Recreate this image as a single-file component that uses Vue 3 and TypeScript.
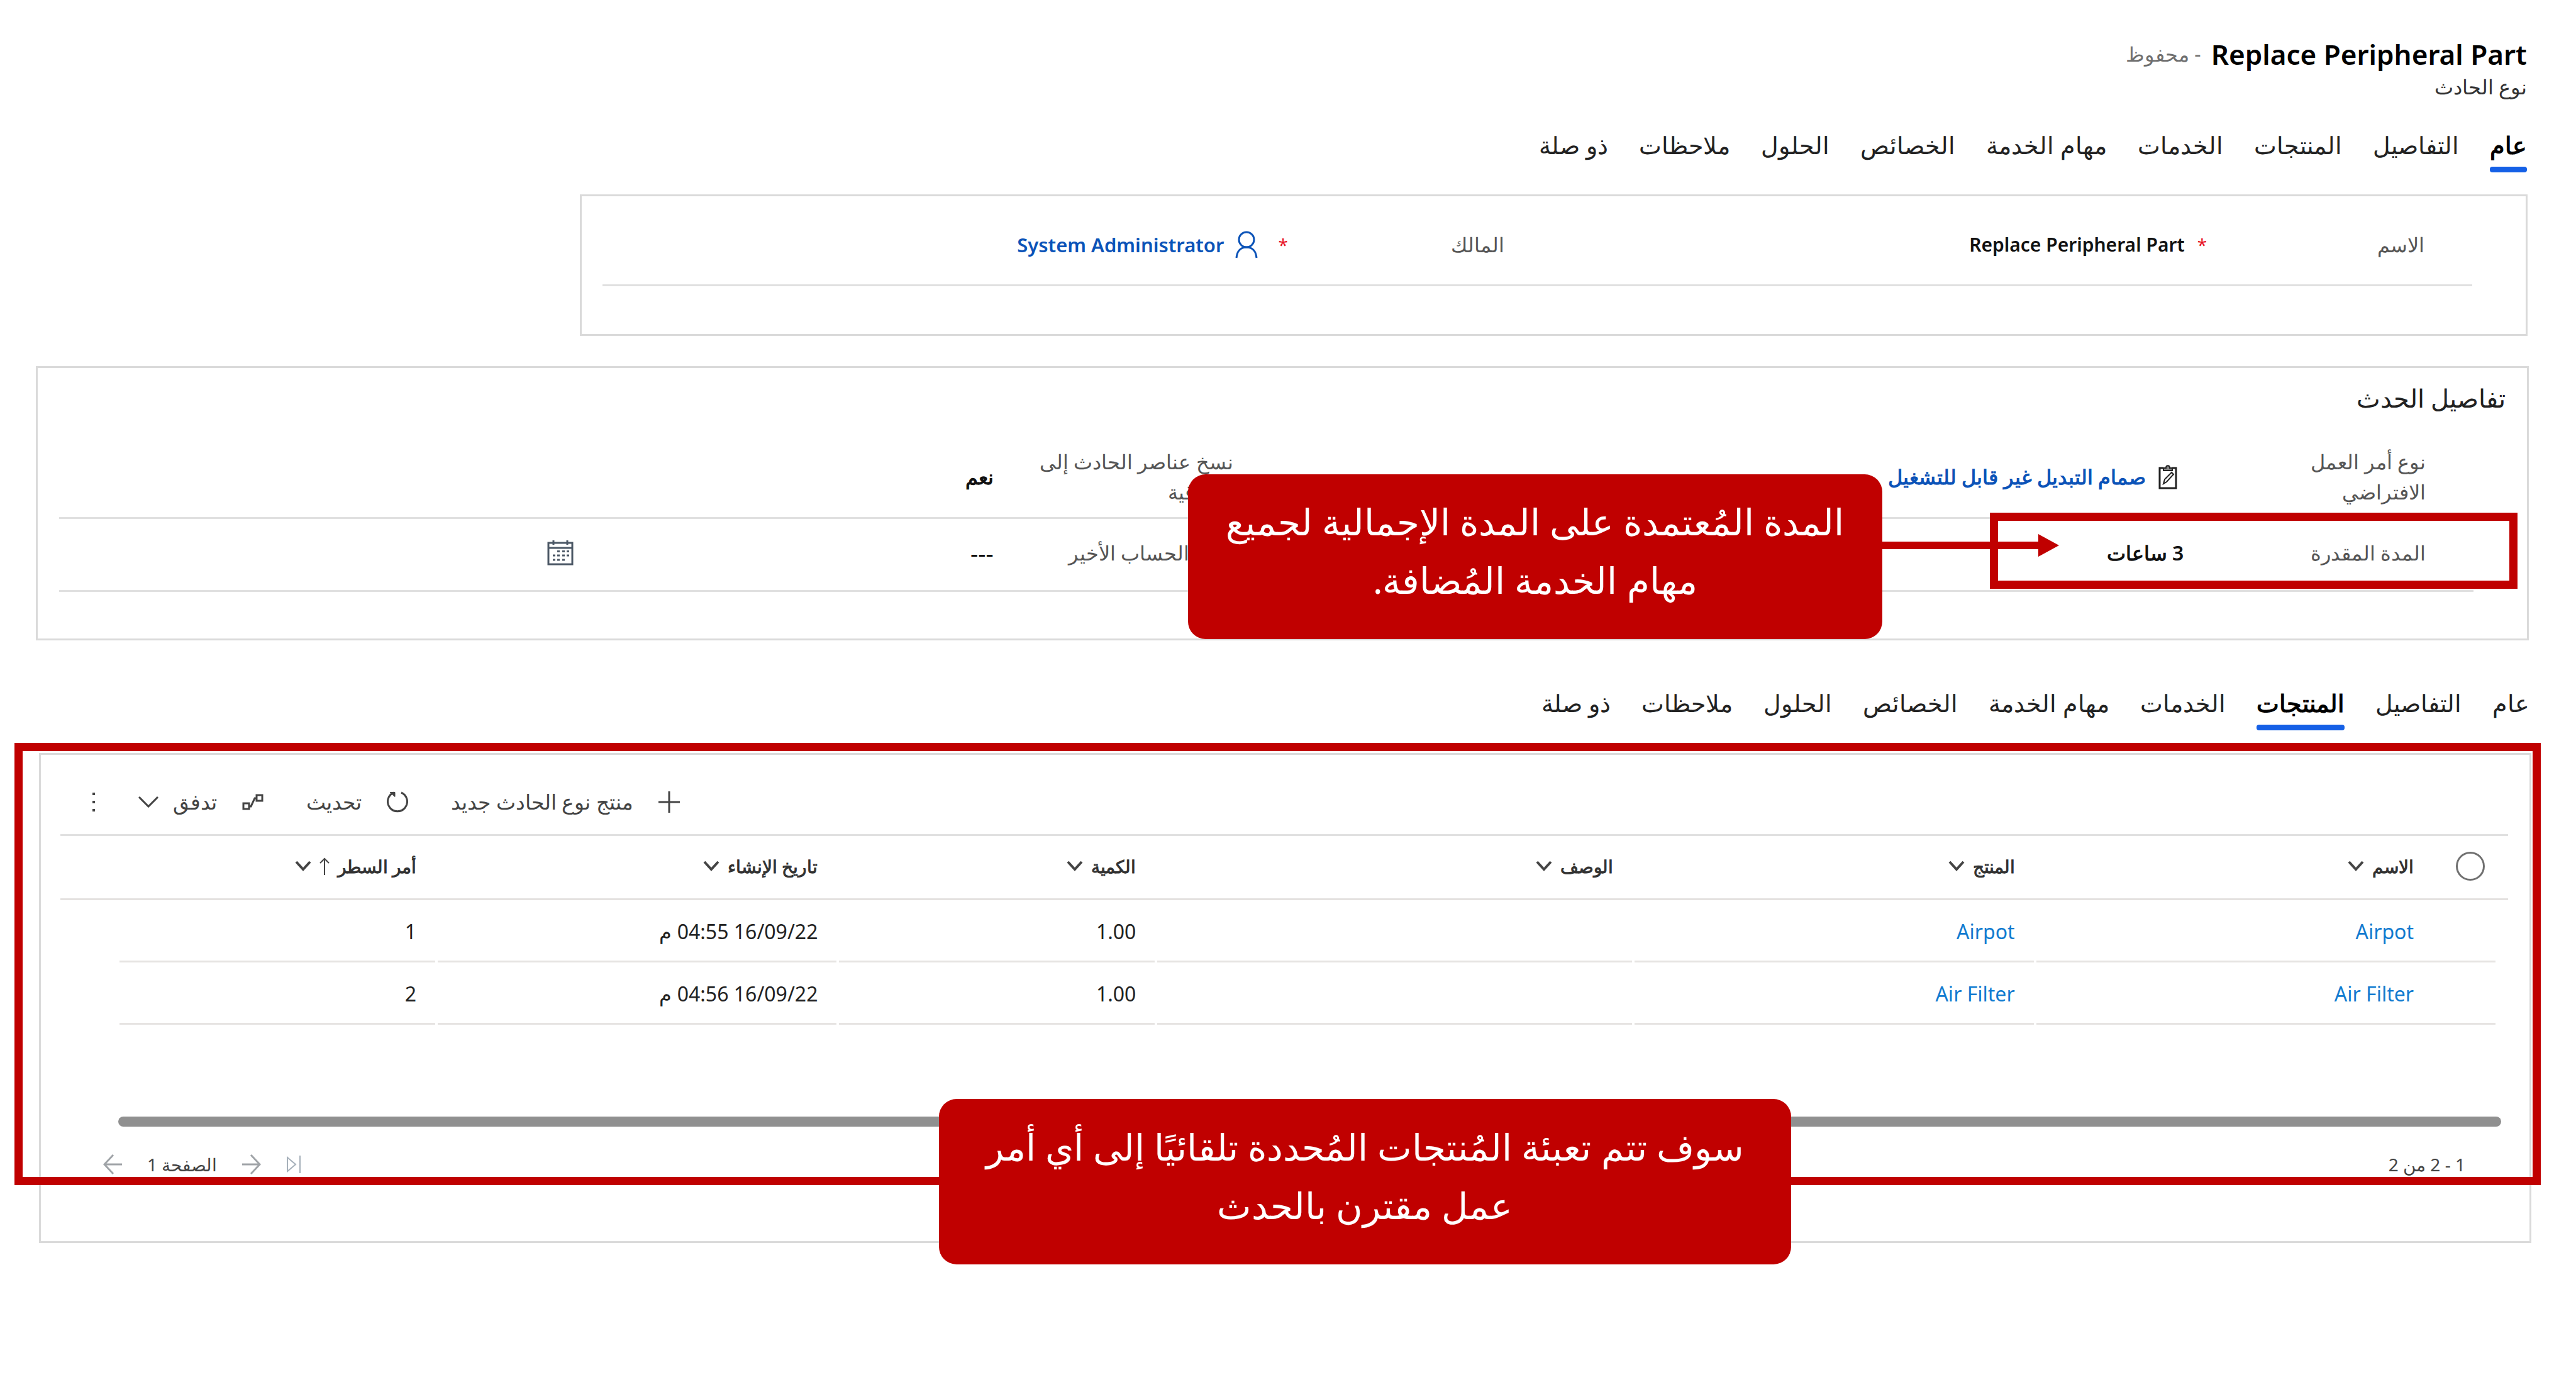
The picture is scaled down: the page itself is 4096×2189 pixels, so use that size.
<script setup lang="ts">
interface Column {
  label: string
  width: string
  sorted?: boolean
}

const tabs: string[] = [
  'عام',
  'التفاصيل',
  'المنتجات',
  'الخدمات',
  'مهام الخدمة',
  'الخصائص',
  'الحلول',
  'ملاحظات',
  'ذو صلة',
]

const columns: Column[] = [
  { label: 'الاسم', width: '16.3%' },
  { label: 'المنتج', width: '16.4%' },
  { label: 'الوصف', width: '19.5%' },
  { label: 'الكمية', width: '13%' },
  { label: 'تاريخ الإنشاء', width: '16.4%' },
  { label: 'أمر السطر', width: '13%', sorted: true },
]

const rows = [
  { name: 'Airpot', product: 'Airpot', description: '', quantity: '1.00', created: '16/09/22 04:55 م', order: 1 },
  { name: 'Air Filter', product: 'Air Filter', description: '', quantity: '1.00', created: '16/09/22 04:56 م', order: 2 },
]
</script>

<template>
  <main class="page" dir="rtl">
    <header class="record">
      <h1 class="record-title">
        <span>Replace Peripheral Part</span>
        <small>- محفوظ</small>
      </h1>
      <p class="record-type">نوع الحادث</p>
    </header>

    <nav class="tabs">
      <button v-for="tab in tabs" :key="tab" type="button" :class="{ active: tab === 'عام' }">{{ tab }}</button>
    </nav>

    <section class="panel summary">
      <div class="fields">
        <div class="label">
          <label for="record-name">الاسم</label>
          <span class="required">*</span>
        </div>
        <div class="value"><input id="record-name" class="name-input" type="text" value="Replace Peripheral Part" /></div>
        <div class="label">
          <span>المالك</span>
          <span class="required">*</span>
        </div>
        <div class="value owner">
          <svg class="icon-person" viewBox="0 0 36 44" fill="none" stroke="#0b53b8" stroke-width="3">
            <circle cx="18" cy="14" r="12" />
            <path d="M2 43C3 32 9 26 18 26s15 6 16 17" />
          </svg>
          <a href="#" class="link">System Administrator</a>
        </div>
      </div>
    </section>

    <section class="panel details">
      <h2>تفاصيل الحدث</h2>
      <div class="fields">
        <div class="label"><span class="two-line">نوع أمر العمل الافتراضي</span></div>
        <div class="value work-type">
          <svg class="icon-clipboard" viewBox="0 0 30 40" fill="none" stroke="#222" stroke-width="3">
            <path d="M8 6H2v32h26V6h-6" />
            <path d="M8 10V6h4c0-5 6-5 6 0h4v4z" fill="#888" stroke-width="2" />
            <path d="M8 31l2-7L21 13l3 3-11 12z" stroke-width="2" />
          </svg>
          <a href="#" class="link">صمام التبديل غير قابل للتشغيل</a>
        </div>
        <div class="label"><span class="two-line wide">نسخ عناصر الحادث إلى الاتفاقية</span></div>
        <div class="value strong">نعم</div>
      </div>
      <div class="fields">
        <div class="label"><label for="duration">المدة المقدرة</label></div>
        <div class="value"><input id="duration" type="text" value="3 ساعات" /></div>
        <div class="label"><span>وقت الحساب الأخير</span></div>
        <div class="value date">
          <span>---</span>
          <button type="button" aria-label="التقويم">
            <svg class="icon-calendar" viewBox="0 0 42 40" fill="none" stroke="#4c5866" stroke-width="3">
              <path d="M2 4h38v34H2zM2 12h38" />
              <path d="M10 0v7M32 0v7" />
              <path d="M16 17.500h4M24 17.500h4M31 17.500h4M9 24h4M16 24h4M24 24h4M31 24h4M9 31h4M16 31h4M24 31h4" />
            </svg>
          </button>
        </div>
      </div>

      <div class="highlight duration-highlight"></div>
      <div class="arrow">
        <svg viewBox="0 0 33 36" fill="#c00000"><path d="M0 0l33 18L0 36z" /></svg>
      </div>
      <p class="callout duration-callout">المدة المُعتمدة على المدة الإجمالية لجميع مهام الخدمة المُضافة.</p>
    </section>

    <nav class="tabs second">
      <button v-for="tab in tabs" :key="tab" type="button" :class="{ active: tab === 'المنتجات' }">{{ tab }}</button>
    </nav>

    <div class="products-area">
      <section class="panel products">
        <div class="toolbar">
          <button type="button">
            <svg class="icon-plus" viewBox="0 0 34 34" fill="none" stroke="#444" stroke-width="3"><path d="M17 0v34M0 17h34" /></svg>
            <span>منتج نوع الحادث جديد</span>
          </button>
          <button type="button">
            <svg class="icon-refresh" viewBox="0 0 34 34" fill="none" stroke="#444" stroke-width="3">
              <path d="M23 2a15.500 15.500 0 1 1-12 0" />
              <path d="M5 1.500h8v7z" fill="#444" stroke-width="1" />
            </svg>
            <span>تحديث</span>
          </button>
          <button type="button">
            <svg class="icon-flow" viewBox="0 0 34 26" fill="none" stroke="#444" stroke-width="3">
              <path d="M2 15h9v9H2zM23 2h9v9h-9zM11 20h3l6-13h3" />
            </svg>
            <span class="with-chevron">
              تدفق
              <svg class="chevron-light" viewBox="0 0 32 18" fill="none" stroke="#444" stroke-width="3"><path d="M1 1l15 15L31 1" /></svg>
            </span>
          </button>
          <button type="button" aria-label="المزيد">
            <svg class="icon-more" viewBox="0 0 6 30" fill="#444"><path d="M1 0h4v4H1zM1 13h4v4H1zM1 26h4v4H1z" /></svg>
          </button>
        </div>

        <table>
          <colgroup>
            <col class="select-col" />
            <col v-for="column in columns" :key="column.label" :style="{ width: column.width }" />
            <col />
          </colgroup>
          <thead>
            <tr>
              <th><input type="checkbox" aria-label="تحديد الكل" /></th>
              <th v-for="column in columns" :key="column.label" scope="col">
                <span class="heading">
                  {{ column.label }}
                  <svg v-if="column.sorted" class="icon-up" viewBox="0 0 16 28" fill="none" stroke="#444" stroke-width="2"><path d="M8 28V2M1 9l7-7 7 7" /></svg>
                  <svg class="chevron" viewBox="0 0 26 17" fill="none" stroke="#444" stroke-width="4"><path d="M2 2l11 12L24 2" /></svg>
                </span>
              </th>
              <td></td>
            </tr>
          </thead>
          <tbody>
            <tr v-for="row in rows" :key="row.order">
              <td></td>
              <td><a href="#">{{ row.name }}</a></td>
              <td><a href="#">{{ row.product }}</a></td>
              <td>{{ row.description }}</td>
              <td>{{ row.quantity }}</td>
              <td>{{ row.created }}</td>
              <td>{{ row.order }}</td>
              <td></td>
            </tr>
          </tbody>
        </table>

        <div class="scrollbar"></div>

        <footer class="pager">
          <span>1 - 2 من 2</span>
          <div class="pager-nav">
            <button type="button" aria-label="الصفحة الأولى">
              <svg class="icon-first" viewBox="0 0 24 28" fill="none" stroke="#a6b0ba" stroke-width="2"><path d="M2 3l13 11L2 25zM22 0v28" /></svg>
            </button>
            <button type="button" aria-label="الصفحة السابقة">
              <svg class="icon-arrow" viewBox="0 0 30 34" fill="none" stroke="#a0a4a8" stroke-width="3"><path d="M0 17h28M14 2l14 15-14 15" /></svg>
            </button>
            <span>الصفحة 1</span>
            <button type="button" aria-label="الصفحة التالية">
              <svg class="icon-arrow" viewBox="0 0 30 34" fill="none" stroke="#a0a4a8" stroke-width="3"><path d="M30 17H2M16 2L2 17l14 15" /></svg>
            </button>
          </div>
        </footer>
      </section>

      <div class="highlight products-highlight"></div>
      <p class="callout products-callout">سوف تتم تعبئة المُنتجات المُحددة تلقائيًا إلى أي أمر عمل مقترن بالحدث</p>
    </div>
  </main>
</template>

<style>
body {
  margin: 0;
  background: #fff;
}
</style>

<style scoped>
.page {
  padding: 56px 0 120px;
  color: #222;
  font-family: "Noto Sans", serif;
  font-size: 32px;
}

h1,
h2,
p {
  margin: 0;
  font-weight: 400;
}

svg {
  display: block;
  flex: none;
}

button {
  display: flex;
  align-items: center;
  padding: 0;
  border: 0;
  background: none;
  color: inherit;
  font: inherit;
}

a {
  color: #117bd0;
  text-decoration: none;
}

.record {
  padding: 0 78px;
}

.record-title {
  display: flex;
  height: 60px;
  gap: 16px;
  align-items: center;
  color: #000;
  font-size: 44px;
  font-weight: 600;
  line-height: 60px;
}

.record-title small {
  color: #707070;
  font-size: 32px;
  font-weight: 400;
}

.record-type {
  height: 48px;
  color: #333;
  line-height: 44px;
}

.tabs {
  display: flex;
  gap: 49px;
  margin-top: 36px;
  padding: 0 78px;
}

.tabs.second {
  margin-top: 69px;
  padding: 0 74px;
}

.tabs button {
  position: relative;
  height: 74px;
  padding-bottom: 14px;
  font-size: 38px;
  line-height: 60px;
}

.tabs .active {
  color: #000;
  font-weight: 700;
}

.tabs .active::after {
  position: absolute;
  inset: auto 0 0;
  height: 9px;
  border-radius: 4px;
  background: #1560e6;
  content: "";
}

.panel {
  position: relative;
  box-sizing: border-box;
  border: 3px solid #dadada;
}

.fields {
  display: grid;
  grid-template-columns: 12% 37.400% 11.900% 1fr;
  align-items: center;
  border-bottom: 3px solid #e0e0e0;
}

.label {
  display: flex;
  align-items: center;
  justify-content: space-between;
  padding: 0 76px 0 20px;
  color: #555;
  line-height: 48px;
}

.required {
  color: #e81123;
  font-size: 28px;
}

.two-line {
  width: 220px;
}

.two-line.wide {
  width: 330px;
  flex: none;
}

.value {
  display: flex;
  align-items: center;
  color: #111;
}

.value input {
  box-sizing: border-box;
  width: 100%;
  padding: 0;
  border: 0;
  background: none;
  color: #111;
  font: 600 32px/48px "Noto Sans", serif;
}

.value .name-input {
  font-size: 30px;
}

.link {
  color: #0b53b8;
  font-weight: 600;
  white-space: nowrap;
}

.strong {
  font-weight: 600;
}

.summary {
  margin: 35px 77px 0 22.500%;
  padding: 14px 85px 76px 33px;
}

.summary .fields {
  grid-template-columns: 457fr 1005fr 455fr 1054fr;
  min-height: 126px;
}

.owner {
  gap: 18px;
  padding-right: 12px;
}

.owner .link {
  font-size: 31px;
}

.icon-person {
  width: 36px;
  height: 44px;
}

.details {
  margin: 48px 75px 0 57px;
  padding: 0 0 74px;
}

.details h2 {
  height: 60px;
  padding: 20px 34px 0;
  font-size: 40px;
  line-height: 56px;
}

.details .fields {
  min-height: 107px;
  margin: 0 85px 0 34px;
  padding-bottom: 6px;
}

.details h2 + .fields {
  min-height: 117px;
  margin-top: 34px;
}

.work-type {
  gap: 20px;
  padding-right: 10px;
}

.icon-clipboard {
  width: 30px;
  height: 40px;
}

.date {
  justify-content: space-between;
  padding-left: 52.200%;
  font-size: 38px;
  line-height: 48px;
}

.icon-calendar {
  width: 42px;
  height: 40px;
}

.highlight {
  position: absolute;
  box-sizing: border-box;
  border: 13px solid #c00000;
  pointer-events: none;
}

.duration-highlight {
  top: 230px;
  right: 15px;
  width: 21.200%;
  height: 121px;
}

.arrow {
  position: absolute;
  top: 264px;
  left: 74%;
  display: flex;
  width: 7.200%;
  align-items: center;
  direction: ltr;
}

.arrow::before {
  height: 12px;
  flex: 1;
  background: #c00000;
  content: "";
}

.arrow svg {
  width: 33px;
  height: 36px;
}

.callout {
  position: absolute;
  display: flex;
  box-sizing: border-box;
  align-items: center;
  justify-content: center;
  padding: 0 40px 20px;
  border-radius: 28px;
  background: #c00000;
  color: #fff;
  font-size: 58px;
  line-height: 93px;
  text-align: center;
}

.duration-callout {
  top: 169px;
  left: 46.200%;
  width: 27.900%;
  height: 262px;
}

.products-area {
  position: relative;
  margin: 36px 71px 0 62px;
}

.products {
  padding: 0 34px 100px 31px;
}

.toolbar {
  display: flex;
  gap: 68px;
  align-items: center;
  justify-content: flex-end;
  min-height: 98px;
  padding: 26px 0 2px 50px;
  border-bottom: 3px solid #e0e0e0;
  color: #444;
  font-size: 33px;
}

.toolbar button {
  gap: 40px;
  line-height: 48px;
}

.with-chevron {
  display: flex;
  gap: 23px;
  align-items: center;
}

.icon-plus,
.icon-refresh {
  width: 34px;
  height: 34px;
}

.icon-flow {
  width: 34px;
  height: 26px;
}

.chevron-light {
  width: 32px;
  height: 18px;
}

.icon-more {
  width: 6px;
  height: 30px;
}

table {
  width: 100%;
  border-spacing: 0;
  table-layout: fixed;
}

.select-col {
  width: 120px;
}

th,
td {
  box-sizing: border-box;
  padding: 0 30px 0 0;
  text-align: right;
  white-space: nowrap;
}

thead th,
thead td {
  height: 102px;
  padding-bottom: 4px;
  border-bottom: 3px solid #e4e2e0;
}

th {
  color: #333;
  font-size: 28px;
  font-weight: 600;
}

thead th:first-child {
  padding: 0 0 4px;
}

th input {
  display: block;
  width: 46px;
  height: 46px;
  margin: 0 auto;
  border: 3px solid #707070;
  border-radius: 50%;
  appearance: none;
}

.heading {
  display: flex;
  gap: 13px;
  align-items: center;
}

.chevron {
  width: 26px;
  height: 17px;
}

.icon-up {
  width: 16px;
  height: 28px;
}

tbody td {
  height: 99px;
  background: linear-gradient(#e6e4e2, #e6e4e2) no-repeat left 4px bottom / 100% 3px;
}

tbody td:first-child {
  background-position: right 20px bottom;
  background-size: calc(100% - 20px) 3px;
}

tbody td:last-child {
  background: none;
}

.scrollbar {
  height: 16px;
  margin: 146px 11px 0 92px;
  border-radius: 8px;
  background: #909090;
}

.pager {
  display: flex;
  height: 44px;
  align-items: center;
  justify-content: space-between;
  margin-top: 38px;
  padding: 0 68px;
  color: #444;
  font-size: 28px;
  line-height: 44px;
}

.pager-nav {
  display: flex;
  align-items: center;
  gap: 40px;
}

.icon-first {
  width: 24px;
  height: 28px;
}

.icon-arrow {
  width: 30px;
  height: 34px;
}

.products-highlight {
  top: -16px;
  right: -15px;
  left: -39px;
  height: 703px;
}

.products-callout {
  top: 550px;
  left: 36.100%;
  width: 34.200%;
  height: 263px;
}
</style>
